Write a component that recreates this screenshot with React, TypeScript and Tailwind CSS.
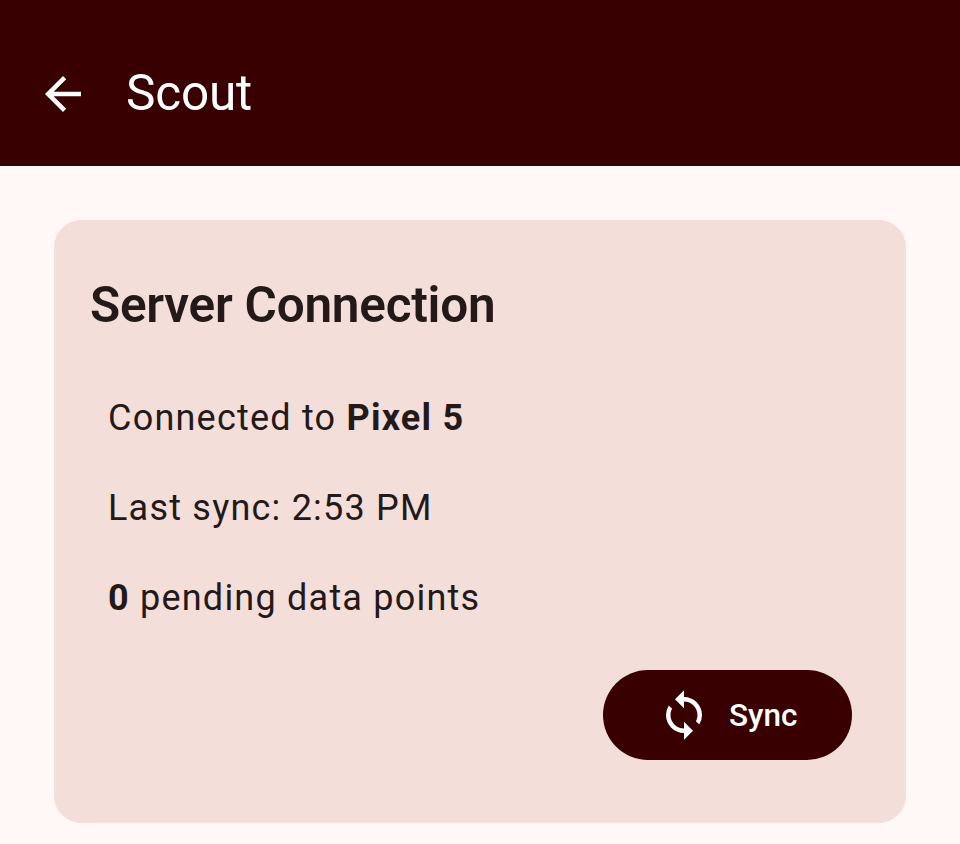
import { MdArrowBack, MdSync } from 'react-icons/md';

type TopBarProps = {
  title: string;
};

const TopBar = ({ title }: TopBarProps) => (
  <header className="flex h-[166px] items-center bg-[#380000] pt-[22px] pl-[36px] text-white">
    <button type="button" aria-label="Back">
      <MdArrowBack className="size-[54px]" />
    </button>
    <h1 className="ml-[36px] pb-[2px] text-[49.5px] leading-[64px] tracking-[-0.2px]">{title}</h1>
  </header>
);

const ServerCard = () => (
  <section className="h-[603px] rounded-[27px] bg-[#f3deda] px-[36px] pt-[49px] text-[#231918]">
    <h2 className="text-[49.5px] leading-[72px] font-semibold tracking-[-0.25px]">Server Connection</h2>
    <div className="mt-[50px] flex flex-col gap-[36px] pl-[18px] text-[36px] leading-[54px] tracking-[1.22px]">
      <p>
        Connected to <b>Pixel 5</b>
      </p>
      <p>Last sync: 2:53 PM</p>
      <p>
        <b>0</b> pending data points
      </p>
    </div>
    <div className="mt-[45px] flex justify-end pr-[18px]">
      <button
        type="button"
        className="flex h-[90px] w-[249px] items-center rounded-full bg-[#380000] pl-[54px] text-[31.5px] font-medium text-white"
      >
        <MdSync className="size-[54px]" />
        <span className="ml-[18px] pt-[2px]">Sync</span>
      </button>
    </div>
  </section>
);

export default function App() {
  return (
    <div className="h-[844px] overflow-hidden bg-[#fff8f6] font-['Roboto',sans-serif]">
      <TopBar title="Scout" />
      <main className="px-[54px] pt-[54px]">
        <ServerCard />
      </main>
    </div>
  );
}
